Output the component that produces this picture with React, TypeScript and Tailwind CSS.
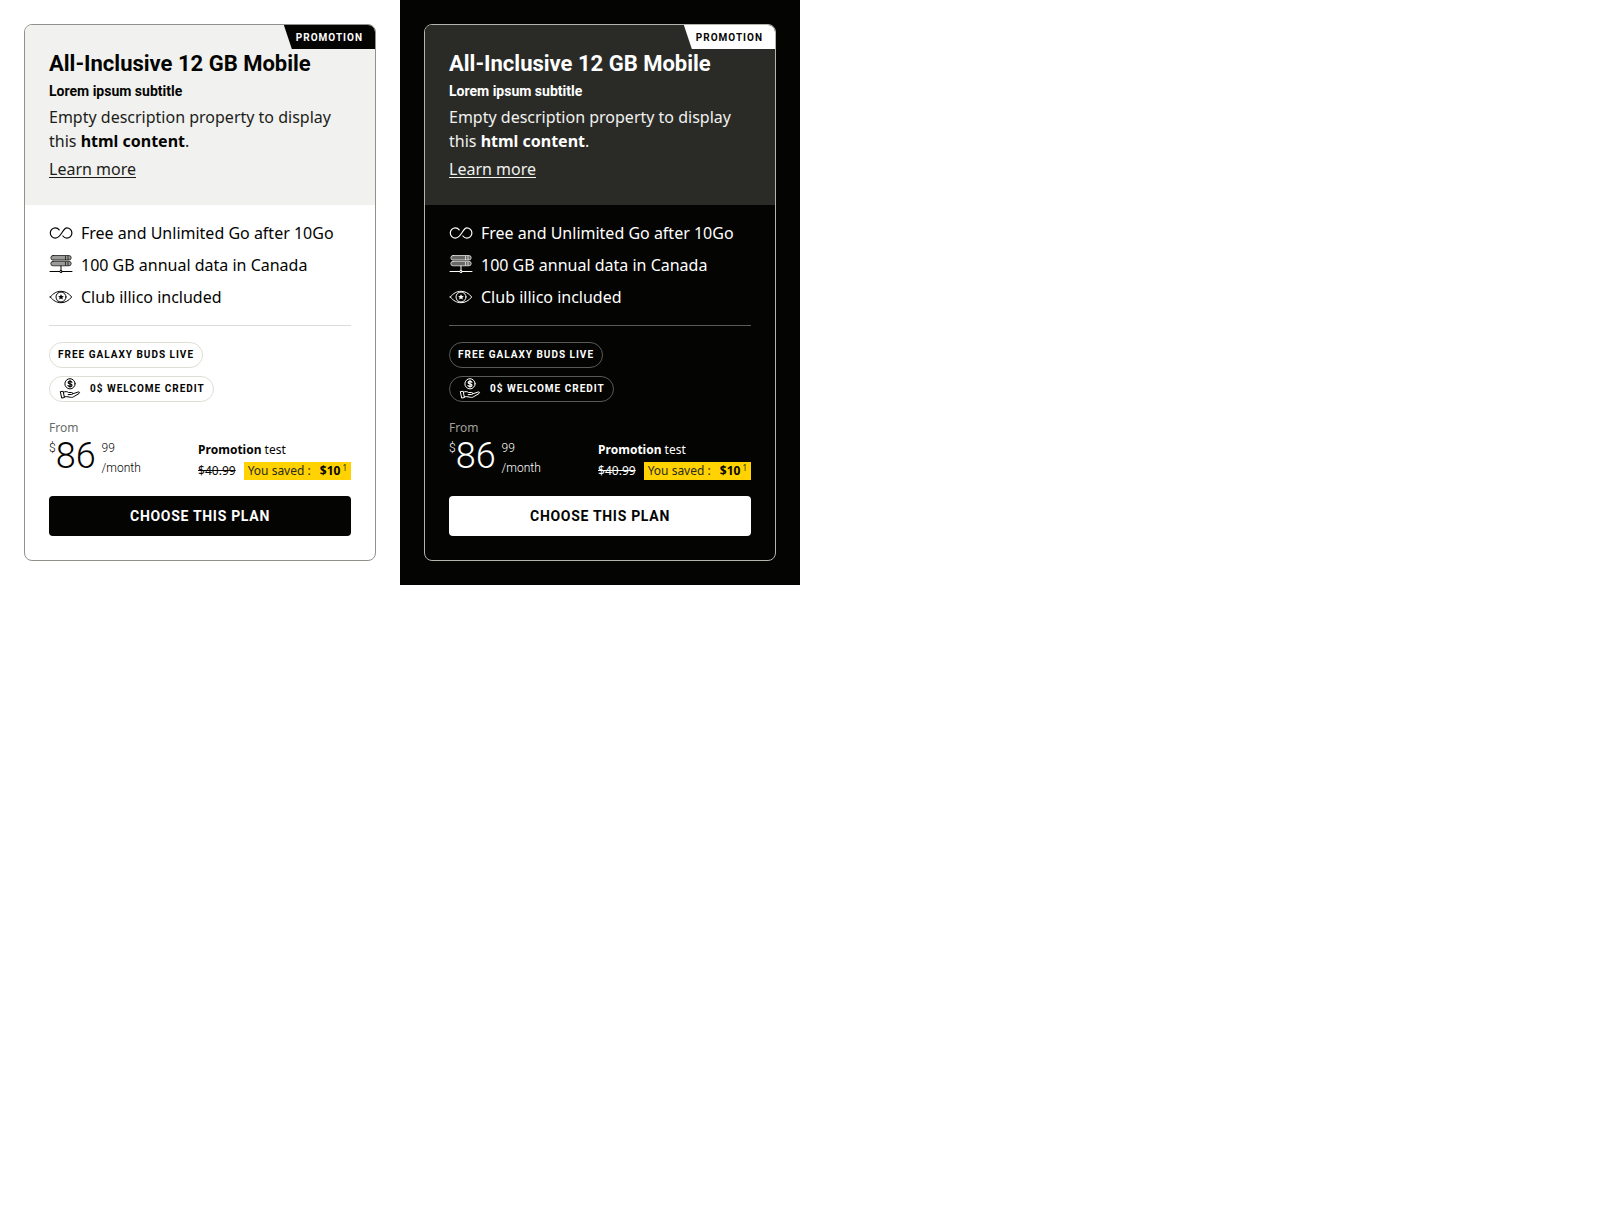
import React from "react";

type Theme = {
  page: string;
  card: string;
  header: string;
  badge: string;
  rule: string;
  pill: string;
  muted: string;
  soft: string;
  strong: string;
  button: string;
};

const light: Theme = {
  page: "bg-white text-[#040402]",
  card: "border-[#8f918b]",
  header: "bg-[#f1f1ef]",
  badge: "bg-[#040402] text-white",
  rule: "border-[#dcdcda]",
  pill: "border-[#deded6]",
  muted: "text-[#6a6b67]",
  soft: "text-[#1c1d1a]",
  strong: "text-[#040402]",
  button: "bg-[#040402] text-white",
};

const dark: Theme = {
  page: "bg-[#040402] text-white",
  card: "border-[#b4b4ac]",
  header: "bg-[#2a2b27]",
  badge: "bg-white text-[#040402]",
  rule: "border-[#5a5b57]",
  pill: "border-[#5a5b57]",
  muted: "text-[#a0a19c]",
  soft: "text-[#f1f1ef]",
  strong: "text-white",
  button: "bg-white text-[#040402]",
};

const iconProps = {
  width: 24,
  height: 24,
  viewBox: "0 0 24 24",
  fill: "none",
  stroke: "currentColor",
  strokeLinecap: "round" as const,
  strokeLinejoin: "round" as const,
  "aria-hidden": true,
};

function InfinityIcon() {
  return (
    <svg {...iconProps} strokeWidth="1.200" className="shrink-0">
      <path d="M10.2 8.9C9.2 7.5 7.900 6.900 6.400 6.900a5.100 5.100 0 0 0 0 10.200c2.100 0 3.500-1.200 5.600-4.100s3.500-6.100 5.800-6.100a5.100 5.100 0 0 1 0 10.200c-1.600 0-2.800-.7-3.900-2.100" />
    </svg>
  );
}

function ServerIcon() {
  return (
    <svg {...iconProps} className="shrink-0">
      <rect x="1.800" y="2.500" width="20.400" height="4.500" rx="2.250" fill="currentColor" fillOpacity=".4" strokeOpacity=".7" />
      <rect x="1.800" y="8.300" width="20.400" height="4.500" rx="2.250" fill="currentColor" fillOpacity=".4" strokeOpacity=".7" />
      <path d="M16.500 3.500v3M19 3.500v3M16.500 9.300v3M19 9.300v3" strokeWidth=".7" />
      <path d="M12 13v4.300M1 18.500h9.800M13.200 18.500H23" />
      <circle cx="12" cy="18.500" r="1.200" />
    </svg>
  );
}

function EyeIcon() {
  return (
    <svg {...iconProps} className="shrink-0">
      <path d="M1.300 12C4.300 8.200 8 6.300 12 6.300S19.700 8.200 22.700 12C19.700 15.800 16 17.700 12 17.700S4.300 15.800 1.300 12Z" />
      <circle cx="12" cy="12" r="5" />
      <path d="m12 9.300.9 1.800 1.900.2-1.400 1.300.4 2-1.800-1-1.800 1 .4-2-1.400-1.300 1.900-.2Z" fill="currentColor" stroke="none" />
    </svg>
  );
}

function CreditIcon() {
  return (
    <svg {...iconProps} className="shrink-0">
      <circle cx="12" cy="6.800" r="5.100" />
      <path d="M13.900 5.300c-.4-.7-1-1-1.900-1-1.100 0-1.900.5-1.900 1.300 0 1.900 3.900.8 3.900 2.700 0 .8-.9 1.300-2 1.300-.9 0-1.700-.4-2-1.100M12 3.400v6.800" strokeWidth="1.200" />
      <path d="m2.700 14.600 2.500-.3 1.200 6.200-2.300.5Z" />
      <path d="M5.400 15.300c2-1.100 3.600-.9 5.100.2h3.200c1.400 0 1.500 1.800.1 1.900l-3.600.2M14.800 16.800l5.300-1.800c1.500-.4 2 .8.9 1.500l-5.300 3.200c-1.100.7-2 .8-3.200.6l-3.800-.7-2.300.3" />
    </svg>
  );
}

const features = [
  { icon: <InfinityIcon />, label: "Free and Unlimited Go after 10Go" },
  { icon: <ServerIcon />, label: "100 GB annual data in Canada" },
  { icon: <EyeIcon />, label: "Club illico included" },
];

function PlanCard({ theme }: { theme: Theme }) {
  return (
    <section className={`p-6 font-['Noto_Sans',sans-serif] ${theme.page}`}>
      <article className={`relative overflow-hidden rounded-lg border ${theme.card}`}>
        <span
          className={`absolute top-0 right-0 flex h-6 items-center px-3 font-['Roboto',sans-serif] text-[10px] font-bold tracking-widest uppercase [clip-path:polygon(0_0,100%_0,100%_100%,8px_100%)] ${theme.badge}`}
        >
          Promotion
        </span>

        <header className={`p-6 ${theme.header}`}>
          <h2 className="font-['Roboto',sans-serif] text-[22px] leading-[30px] font-bold">
            All-Inclusive 12 GB Mobile
          </h2>
          <p className="mt-0.5 font-['Roboto',sans-serif] text-sm leading-5 font-bold">
            Lorem ipsum subtitle
          </p>
          <p className={`mt-1 text-base ${theme.soft}`}>
            Empty description property to display this{" "}
            <strong className={`font-bold ${theme.strong}`}>html content</strong>.
          </p>
          <a
            href="#details"
            className={`mt-1 block w-fit text-base underline underline-offset-2 ${theme.soft}`}
          >
            Learn more
          </a>
        </header>

        <div className="px-6 pt-4 pb-6">
          <ul className="flex flex-col gap-2">
            {features.map((feature) => (
              <li key={feature.label} className="flex items-center gap-2 text-base">
                {feature.icon}
                {feature.label}
              </li>
            ))}
          </ul>

          <hr className={`my-4 ${theme.rule}`} />

          <ul className="flex flex-col items-start gap-2 font-['Roboto',sans-serif] text-[10px] leading-6 font-bold tracking-widest uppercase">
            <li className={`rounded-full border px-2 ${theme.pill}`}>Free Galaxy Buds Live</li>
            <li className={`flex items-center gap-2 rounded-full border px-2 ${theme.pill}`}>
              <CreditIcon />
              0$ Welcome credit
            </li>
          </ul>

          <p className={`mt-4 text-xs leading-5 ${theme.muted}`}>From</p>
          <div className="flex items-start justify-between">
            <div className="flex items-start font-['Roboto',sans-serif] font-light">
              <span className="text-xs leading-5">$</span>
              <span className="text-4xl leading-9">86</span>
              <span className="ml-1.5 flex flex-col text-xs leading-5">
                <span>99</span>
                <span>/month</span>
              </span>
            </div>
            <div className="text-xs">
              <p className="leading-6">
                <strong className="font-bold">Promotion</strong> test
              </p>
              <p className="flex items-center gap-2 leading-[18px]">
                <s>$40.99</s>
                <span className="bg-[#ffd200] px-1 text-[#2a2b27]">
                  You saved : <strong className="ml-1.5 font-bold text-[#040402]">$10</strong>
                  <sup className="ml-0.5 text-[8px]">1</sup>
                </span>
              </p>
            </div>
          </div>

          <button
            type="button"
            className={`mt-4 h-10 w-full rounded font-['Roboto',sans-serif] text-sm font-bold tracking-wider uppercase ${theme.button}`}
          >
            Choose this plan
          </button>
        </div>
      </article>
    </section>
  );
}

export default function App() {
  return (
    <main className="min-h-screen bg-white">
      <div className="grid grid-cols-1 sm:grid-cols-2 xl:grid-cols-4">
        <PlanCard theme={light} />
        <PlanCard theme={dark} />
      </div>
    </main>
  );
}
